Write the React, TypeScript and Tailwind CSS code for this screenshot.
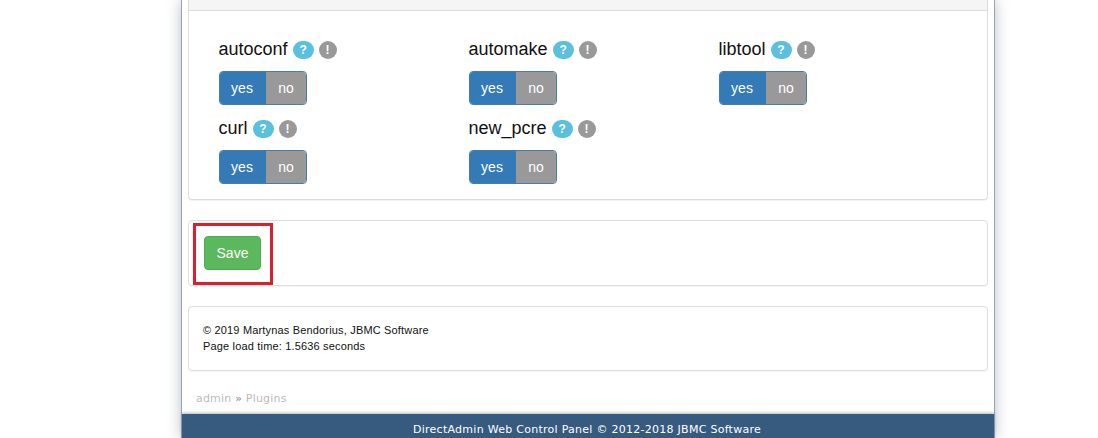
const plugins = ['autoconf', 'automake', 'libtool', 'curl', 'new_pcre']

function Plugin({ name }: { name: string }) {
  return (
    <div className="w-[250px]">
      <div className="flex h-[34px] items-center text-[18px] leading-[20px] text-[#111]">
        <span className="-ml-[0.5px]">{name}</span>
        <span className="ml-[5px] mt-[2px] flex h-[18px] w-[21px] items-center justify-center rounded-full bg-[#5bc0de] text-[12px] font-bold text-white">?</span>
        <span className="ml-[5px] mt-[2px] flex h-[18px] w-[18px] items-center justify-center rounded-full bg-[#999] text-[12px] font-bold text-white">!</span>
      </div>
      <div className="mt-[5px] flex h-[34px] w-[88px] overflow-hidden rounded-[4px] border border-[#4a7ba6] text-[14px] text-white">
        <div className="flex w-[46px] items-center justify-center bg-[#337ab7] pr-[2px]">yes</div>
        <div className="flex flex-1 items-center justify-center bg-[#999]">no</div>
      </div>
    </div>
  )
}

export default function App() {
  return (
    <div className="h-[438px] overflow-hidden bg-white font-['Liberation_Sans',Arial,sans-serif]">
      <div className="mx-auto ml-[181px] flex h-[438px] w-[814px] flex-col border-x border-[#93a6be] bg-white shadow-[0_0_13px_rgba(60,70,100,0.35)]">
        <div className="px-[6px]">
          <section className="h-[200px] rounded-b-[4px] border border-t-0 border-[#ddd] shadow-[0_1px_1px_rgba(0,0,0,0.05)]">
            <div className="h-[11px] border-b border-[#ddd] bg-[#f5f5f5]" />
            <div className="flex flex-wrap gap-y-[6px] pl-[30px] pt-[21px]">
              {plugins.map((name) => (
                <Plugin key={name} name={name} />
              ))}
            </div>
          </section>

          <section className="mt-[20px] h-[66px] rounded-[4px] border border-[#ddd] p-[15px] shadow-[0_1px_1px_rgba(0,0,0,0.05)]">
            <button type="button" className="h-[34px] w-[57px] rounded-[4px] border border-[#4cae4c] bg-[#5cb85c] text-[14px] text-white">
              Save
            </button>
          </section>

          <section className="mt-[20px] h-[65px] rounded-[4px] border border-[#ddd] px-[14px] pt-[15px] text-[11px] leading-[16px] tracking-[0.17px] text-[#111] shadow-[0_1px_1px_rgba(0,0,0,0.05)]">
            <p>© 2019 Martynas Bendorius, JBMC Software</p>
            <p>Page load time: 1.5636 seconds</p>
          </section>
        </div>

        <div className="mt-[21px] px-[14px] font-['DejaVu_Sans',sans-serif] text-[11px] leading-[14px] tracking-[0.2px] text-[#bbb]">
          admin <span className="text-[#888]">»</span> Plugins
        </div>

        <footer className="mt-[8px] flex h-[25px] items-center justify-center bg-[#375a7f] pr-[2px] pt-[8px] font-['DejaVu_Sans',sans-serif] text-[11px] tracking-[0.27px] text-white shadow-[0_-1px_3px_rgba(0,0,0,0.3)]">
          DirectAdmin Web Control Panel © 2012-2018 JBMC Software
        </footer>
      </div>
      <div className="absolute left-[193px] top-[223px] h-[62px] w-[80px] border-[3px] border-[#dc1f2e]" />
    </div>
  )
}
